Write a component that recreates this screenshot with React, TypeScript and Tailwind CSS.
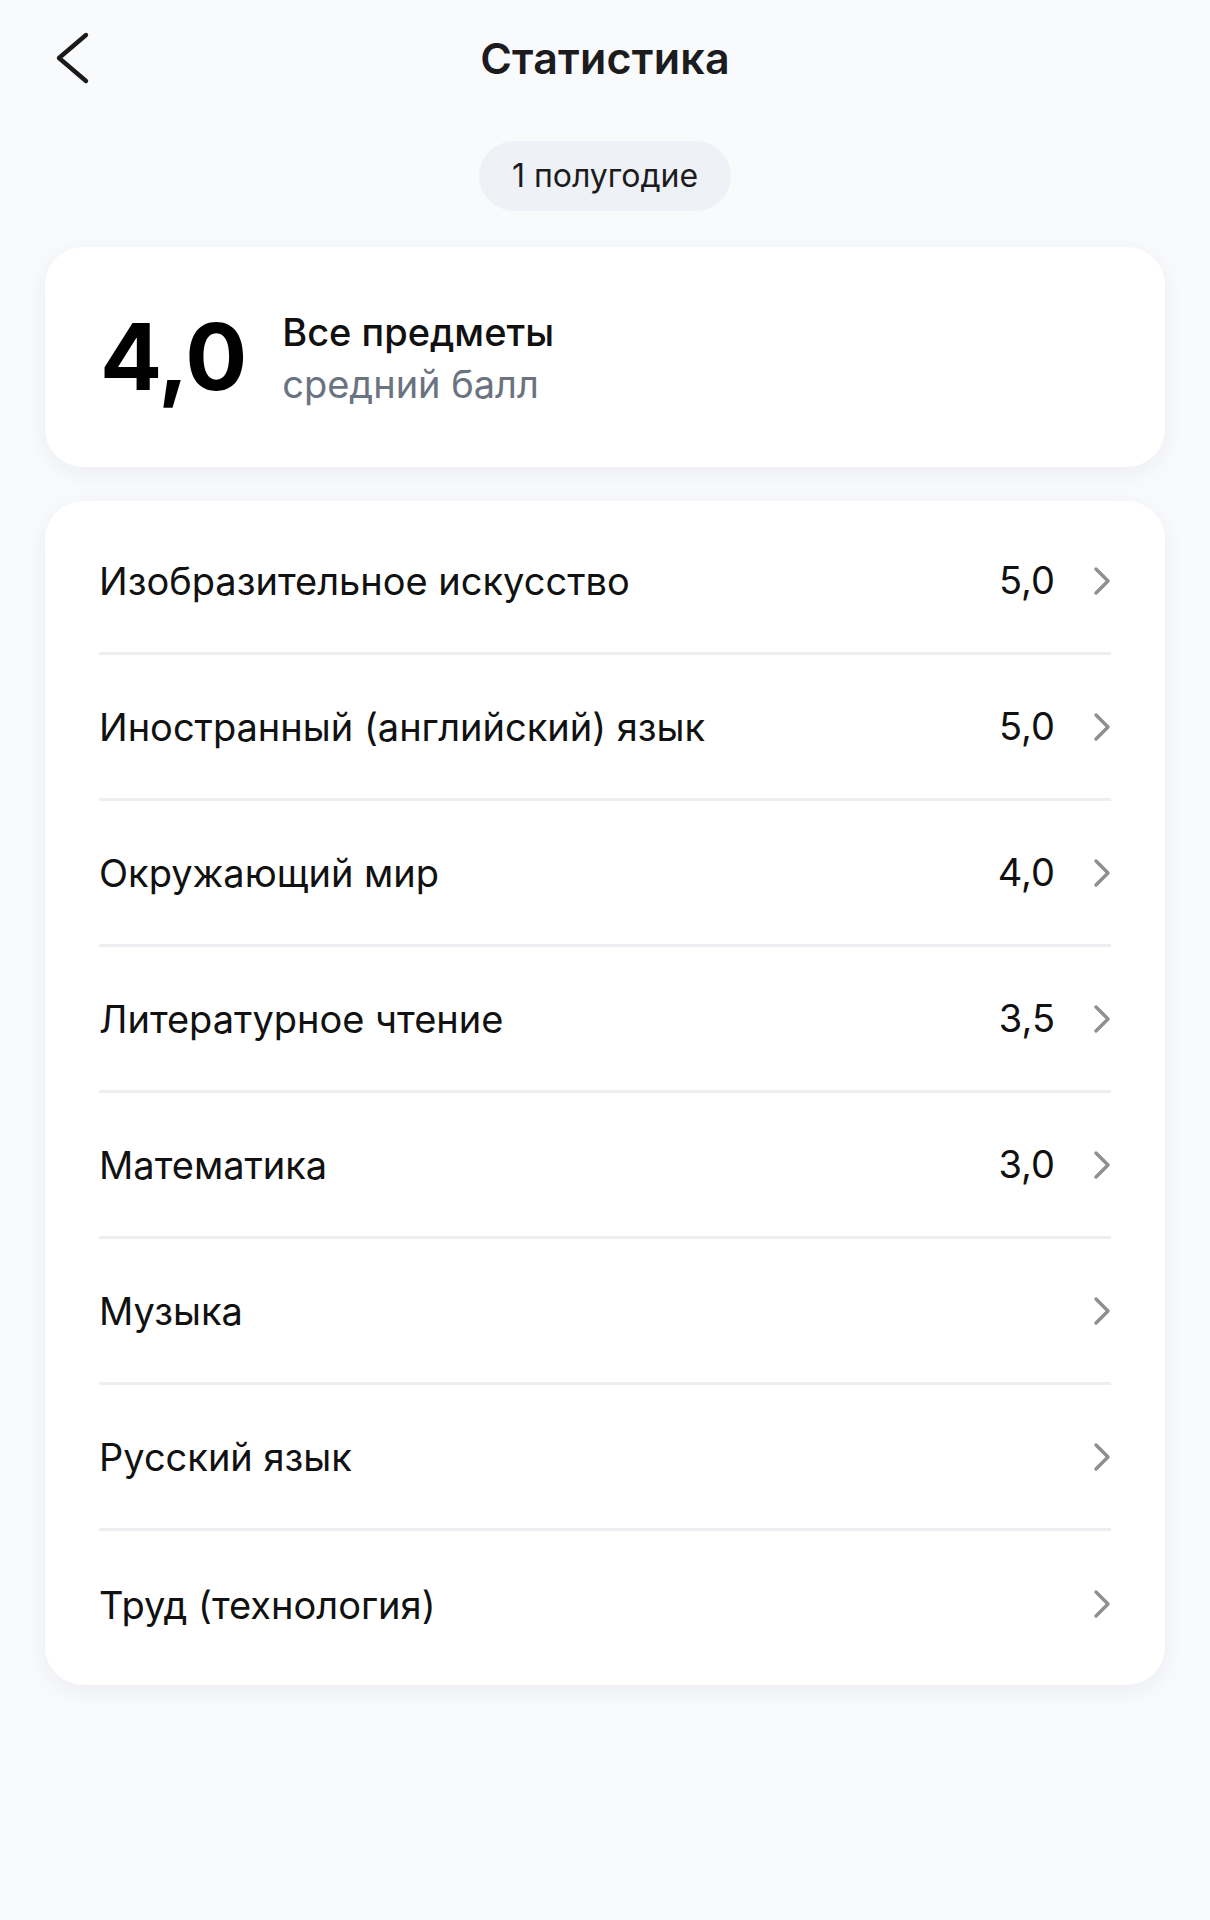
import React from "react";

const subjects: { name: string; value?: string }[] = [
  { name: "Изобразительное искусство", value: "5,0" },
  { name: "Иностранный (английский) язык", value: "5,0" },
  { name: "Окружающий мир", value: "4,0" },
  { name: "Литературное чтение", value: "3,5" },
  { name: "Математика", value: "3,0" },
  { name: "Музыка" },
  { name: "Русский язык" },
  { name: "Труд (технология)" },
];

function Chevron({ className }: { className?: string }) {
  return (
    <svg viewBox="0 0 18 30" className={className} fill="none" stroke="currentColor" strokeWidth={3.4} strokeLinecap="round" strokeLinejoin="round">
      <path d="M3 3l12 12-12 12" />
    </svg>
  );
}

export default function App() {
  return (
    <div className="min-h-[1920px] w-[1210px] bg-[#f9fafc] text-[#111] font-['Inter',sans-serif]">
      <div className="relative h-[116px] flex items-center justify-center">
        <svg viewBox="0 0 38 54" className="absolute left-[52px] top-[31px] w-[38px] h-[54px] text-[#1a1a1a]" fill="none" stroke="currentColor" strokeWidth={4.4} strokeLinecap="round" strokeLinejoin="round">
          <path d="M34 4L7 27l27 23" />
        </svg>
        <h1 className="text-[43px] font-semibold tracking-[0.2px] text-[#1c1c1e]">Статистика</h1>
      </div>
      <div className="flex justify-center mt-[25px]">
        <div className="h-[70px] px-[33px] rounded-full bg-[#eef1f5] flex items-center text-[32px] text-[#1c1c1e]">
          1 полугодие
        </div>
      </div>
      <div className="mx-[45px] mt-[36px] h-[220px] bg-white rounded-[38px] shadow-[0_6px_24px_rgba(20,30,60,0.06)] flex items-center pl-[55px] gap-[36px]">
        <div className="text-[92px] font-bold leading-none tracking-[-1px] text-black">4,0</div>
        <div className="flex flex-col pt-[2px]">
          <div className="text-[38px] font-medium leading-[52px] text-[#111]">Все предметы</div>
          <div className="text-[38px] leading-[52px] text-[#6b7280]">средний балл</div>
        </div>
      </div>
      <div className="mx-[45px] mt-[34px] bg-white rounded-[38px] shadow-[0_6px_24px_rgba(20,30,60,0.06)] py-[8px] px-[54px]">
        {subjects.map((s, i) => (
          <div key={s.name} className={`h-[146px] flex items-center ${i < subjects.length - 1 ? "border-b-[3px] border-[#eceef1]" : ""}`}>
            <div className="flex-1 text-[38px] text-[#111] pt-[2px]">{s.name}</div>
            {s.value && <div className="text-[38px] text-[#111] mr-[38px]">{s.value}</div>}
            <Chevron className="w-[18px] h-[30px] text-[#8e8e93]" />
          </div>
        ))}
      </div>
    </div>
  );
}
